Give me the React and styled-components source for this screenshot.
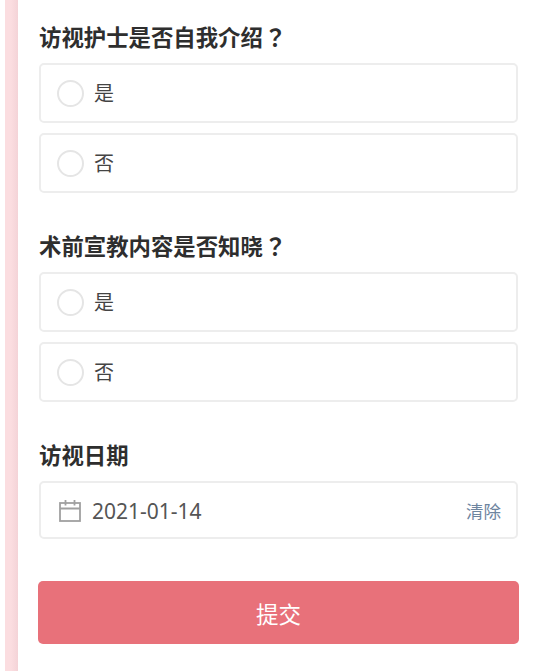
import React from "react";
import styled, { createGlobalStyle } from "styled-components";

const GlobalStyle = createGlobalStyle`
  *, *::before, *::after { box-sizing: border-box; }
  body {
    margin: 0;
    background: #fff;
    font-family: "Noto Sans", "Noto Sans CJK SC", sans-serif;
    color: #333;
  }
`;

const Page = styled.div`
  display: flex;
  height: 671px;
  padding-left: 5px;
  overflow: hidden;
`;

const Edge = styled.div`
  flex: 0 0 13px;
  background: linear-gradient(to right, #fbdde0 0 6px, #f4d3d7 13px);
`;

const Form = styled.form`
  flex: 1;
  display: flex;
  flex-direction: column;
  gap: 36px;
  padding: 20px 21px 0;
`;

const Question = styled.section`
  display: flex;
  flex-direction: column;
  gap: 10px;
`;

const Title = styled.h2`
  margin: 0 0 -3px;
  height: 36px;
  line-height: 33px;
  font-family: "Noto Sans CJK SC", sans-serif;
  font-size: 22.4px;
  font-weight: 700;
  color: #2e2e2e;
  white-space: nowrap;
`;

const Mark = styled.span`
  margin-left: 1px;
  font-family: "Noto Sans CJK TC", "Noto Sans CJK SC", sans-serif;
`;

const Field = styled.div`
  display: flex;
  align-items: center;
  height: ${(p) => p.$height}px;
  padding: 0 15px 0 16px;
  border: 2px solid #ededed;
  border-radius: 5px;
  background: #fff;
`;

const Radio = styled.span`
  width: 27px;
  height: 27px;
  margin-right: 10px;
  border: 2px solid #e5e5e5;
  border-radius: 50%;
`;

const Label = styled.span`
  font-family: "Noto Sans CJK SC", sans-serif;
  font-size: 20px;
  line-height: 30px;
  color: #444;
`;

const CalendarIcon = styled.svg`
  width: 22px;
  height: 22px;
  margin: 1px 11px 0 2px;
  fill: none;
  stroke: #a0a0a0;
  stroke-width: 1.8;
`;

const DateText = styled.span`
  flex: 1;
  padding-top: 2px;
  font-size: 21px;
  line-height: 30px;
  color: #555;
`;

const Clear = styled.a`
  padding-top: 1px;
  font-family: "Noto Sans CJK SC", sans-serif;
  font-size: 17.5px;
  line-height: 26px;
  color: #6e859f;
`;

const Submit = styled.button`
  height: 63px;
  margin: 6px -1px 0;
  padding: 2px 0 0;
  border: 0;
  border-radius: 5px;
  background: #e8717a;
  color: #fff;
  font-family: "Noto Sans CJK SC", sans-serif;
  font-size: 22.5px;
  line-height: 61px;
`;

function Choice({ title }) {
  return (
    <Question>
      <Title>
        {title}
        <Mark lang="zh-TW">？</Mark>
      </Title>
      {["是", "否"].map((text) => (
        <Field key={text} $height={60}>
          <Radio />
          <Label>{text}</Label>
        </Field>
      ))}
    </Question>
  );
}

export default function App() {
  return (
    <>
      <GlobalStyle />
      <Page>
        <Edge />
        <Form>
          <Choice title="访视护士是否自我介绍" />
          <Choice title="术前宣教内容是否知晓" />
          <Question>
            <Title>访视日期</Title>
            <Field $height={58}>
              <CalendarIcon viewBox="0 0 22 22">
                <rect x="1" y="3" width="20" height="18" />
                <path d="M1 8.5H21M6.5 0V5.5M15.5 0V5.5" />
              </CalendarIcon>
              <DateText>2021-01-14</DateText>
              <Clear>清除</Clear>
            </Field>
          </Question>
          <Submit type="button">提交</Submit>
        </Form>
      </Page>
    </>
  );
}
